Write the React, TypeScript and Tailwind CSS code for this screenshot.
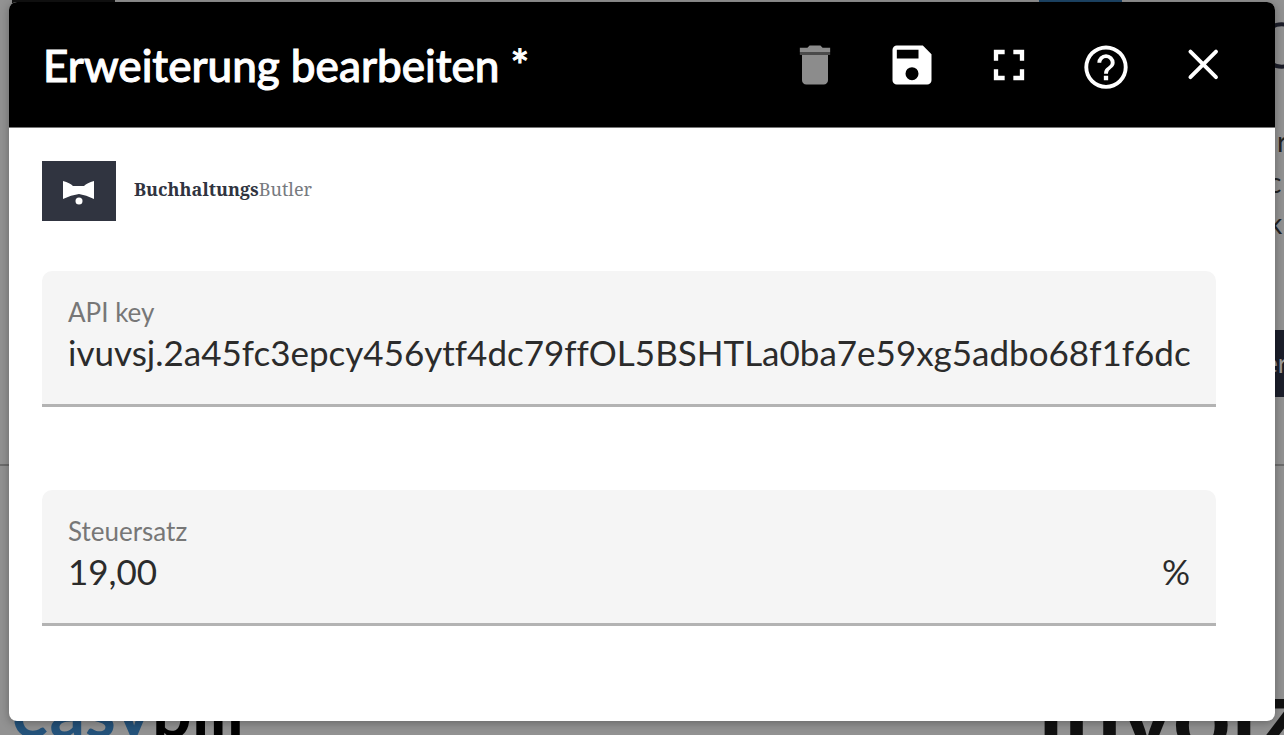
import type { ReactNode } from "react";

type ActionProps = { label: string; disabled?: boolean; viewBox?: string; children: ReactNode };

function Action({ label, disabled, viewBox = "0 0 24 24", children }: ActionProps) {
  return (
    <button type="button" aria-label={label} disabled={disabled} className="size-[52px] text-white disabled:text-[#8c8c8c]">
      <svg viewBox={viewBox} className="size-full" fill="currentColor" aria-hidden="true">
        {children}
      </svg>
    </button>
  );
}

function Field({ id, label, value, suffix }: { id: string; label: string; value: string; suffix?: string }) {
  return (
    <div className="flex h-[136px] flex-col rounded-t-[10px] border-b-[3px] border-[#b3b3b3] bg-[#f5f5f5] px-[26px] pt-[25px]">
      <label htmlFor={id} className="text-[26px] leading-[32px] text-[#777777]">
        {label}
      </label>
      <div className="flex items-center text-[35px] leading-[48px] text-[#2b2b2b]">
        <input id={id} defaultValue={value} className="h-12 min-w-0 flex-1 bg-transparent outline-none [font-variant-ligatures:none]" />
        {suffix && <span>{suffix}</span>}
      </div>
    </div>
  );
}

function Backdrop() {
  return (
    <div aria-hidden="true" className="absolute inset-0 flex flex-col overflow-hidden bg-[#929292]">
      <div className="flex h-[466px] shrink-0 justify-between border-b-2 border-[#6c6c6c]">
        <div className="ml-3 h-5 w-[103px] bg-[#111111]" />
        <div className="flex">
          <div className="h-5 w-[83px] bg-[#1d4668]" />
          <div className="ml-[142px] flex w-5 flex-col whitespace-nowrap text-[28px] leading-[41px] text-[#222222]">
            <svg viewBox="0 0 20 48" className="mt-[22px] h-12 w-5" fill="none" stroke="#1b1d28" strokeWidth="4">
              <path d="M8 5Q14 1 24 3M8 42Q14 46 24 44" />
            </svg>
            <span className="mt-[51px] pl-[13px]">r</span>
            <span className="pl-1">c</span>
            <span className="pl-1">k</span>
            <span className="mt-[86px] h-[67px] bg-[#1b1e2a] text-[26px] leading-[67px] text-[#9a9a9a]">er</span>
          </div>
        </div>
      </div>
      <div className="flex h-[269px] shrink-0 items-end justify-between pl-3 font-bold">
        <p className="text-[70px] leading-[50px]">
          <span className="text-[#24527a]">easy</span>
          <span className="text-black">bill</span>
        </p>
        <p className="w-[246px] text-[102px] leading-[46px] whitespace-nowrap text-[#111111]">invoiz</p>
      </div>
    </div>
  );
}

export default function App() {
  return (
    <div className="relative min-h-screen overflow-hidden px-[9px] pt-[2px] pb-[14px] font-['Lato',sans-serif]">
      <Backdrop />
      <section
        role="dialog"
        aria-labelledby="dialog-title"
        className="relative overflow-hidden rounded-[8px] bg-white shadow-[0_2px_10px_rgba(0,0,0,0.3)]"
      >
        <header className="flex h-[126px] items-center justify-between border-b border-[#777777] bg-black pr-[46px] pl-[34px]">
          <h1 id="dialog-title" className="text-[44px] leading-[56px] font-medium text-white [-webkit-text-stroke:1px_white]">
            Erweiterung bearbeiten *
          </h1>
          <div className="flex gap-[45px]">
            <Action label="Löschen" disabled>
              <path d="M6 19c0 1.1.9 2 2 2h8c1.1 0 2-.9 2-2V7.4H6zM19 4h-3.5l-1-1h-5l-1 1H5v2h14z" />
              <path d="M5 6h14v1.400H5z" fill="#4a4a4a" />
            </Action>
            <Action label="Speichern">
              <path d="M17 3H5a2 2 0 0 0-2 2v14a2 2 0 0 0 2 2h14a2 2 0 0 0 2-2V7zm-5 16a3 3 0 1 1 0-6 3 3 0 0 1 0 6m3-10H5V5h10z" />
            </Action>
            <Action label="Vollbild">
              <path d="M7 14H5v5h5v-2H7zM5 10h2V7h3V5H5zm12 7h-3v2h5v-5h-2zM14 5v2h3v3h2V5z" />
            </Action>
            <Action label="Hilfe" viewBox="0 -1 24 24">
              <path d="M11 18h2v-2h-2zm1-16a10 10 0 1 0 0 20 10 10 0 0 0 0-20m0 18.200a8.200 8.200 0 1 1 0-16.400 8.200 8.200 0 0 1 0 16.400M12 6a4 4 0 0 0-4 4h1.800a2.200 2.200 0 1 1 4.400 0c0 2-3.100 1.750-3.100 5h1.800c0-2.250 3.100-2.500 3.100-5a4 4 0 0 0-4-4" />
            </Action>
            <Action label="Schließen">
              <path d="M6.200 5.800l11.800 11.800M18 5.800L6.200 17.600" stroke="currentColor" strokeWidth="1.800" strokeLinecap="round" />
            </Action>
          </div>
        </header>

        <div className="pt-[33px] pr-[59px] pb-[95px] pl-[33px]">
          <div className="flex items-center gap-[18px]">
            <svg viewBox="0 0 74 60" className="h-[60px] w-[74px]" aria-hidden="true">
              <path d="M0 0H74V60H0z" fill="#303440" />
              <path d="M21 20Q28 22 31 25H42Q45 22 52 20V38Q44 34 37 33Q29 34 21 38z" fill="#fff" />
              <circle cx="37" cy="40" r="3.500" fill="#fff" />
            </svg>
            <p className="pb-1 font-['Noto_Serif','Liberation_Serif',serif] text-[18px] leading-7 text-[#777a80]">
              <strong className="text-[#303440]">Buchhaltungs</strong>Butler
            </p>
          </div>
          <form className="mt-[50px] flex flex-col gap-[83px]">
            <Field id="api-key" label="API key" value="ivuvsj.2a45fc3epcy456ytf4dc79ffOL5BSHTLa0ba7e59xg5adbo68f1f6dc4" />
            <Field id="tax-rate" label="Steuersatz" value="19,00" suffix="%" />
          </form>
        </div>
      </section>
    </div>
  );
}
